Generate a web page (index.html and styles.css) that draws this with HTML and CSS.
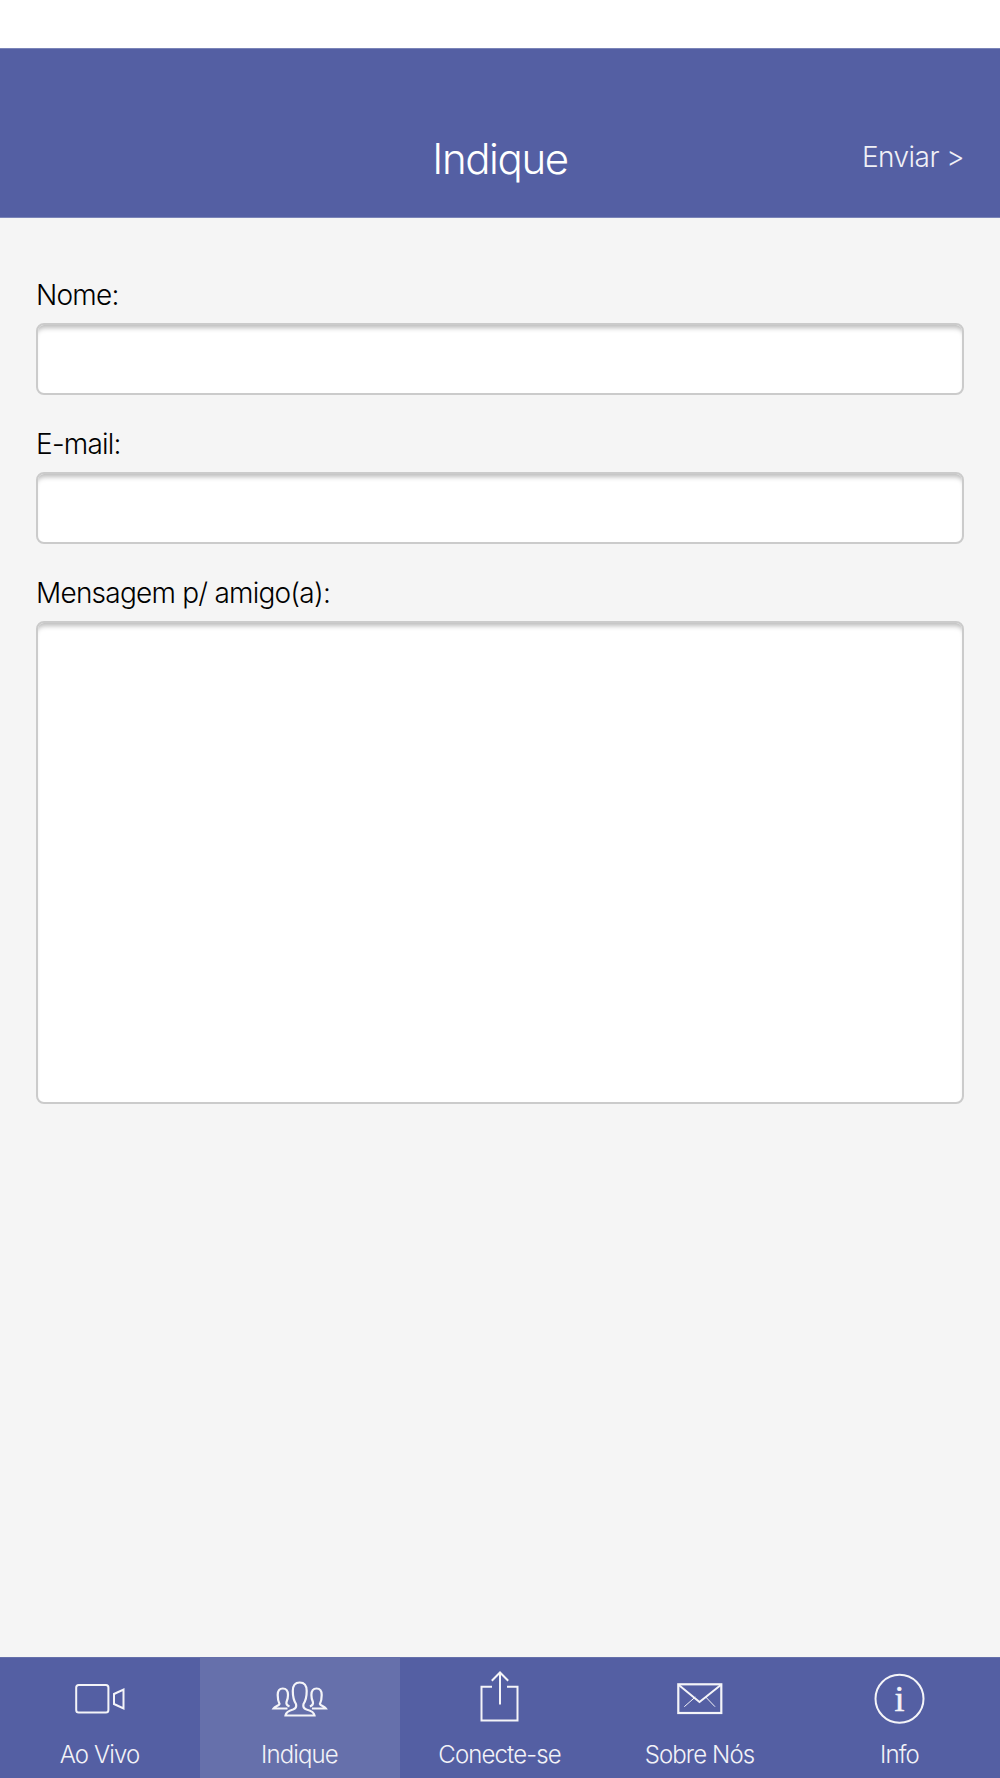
FILE: index.html
```html
<!DOCTYPE html>
<html lang="pt">
<head>
<meta charset="utf-8">
<title>Indique</title>
<link rel="stylesheet" href="styles.css">
</head>
<body>
<div class="app">
  <div class="status"></div>
  <header class="header">
    <h1 class="title">Indique</h1>
    <a class="send">Enviar &gt;</a>
  </header>
  <main class="form">
    <label class="label">Nome:</label>
    <input class="field" type="text">
    <label class="label">E-mail:</label>
    <input class="field" type="text">
    <label class="label">Mensagem p/ amigo(a):</label>
    <textarea class="field area"></textarea>
  </main>
  <nav class="tabs">
    <a class="tab">
      <svg class="icon" viewBox="0 0 60 60"><rect x="6.2" y="16" width="32.2" height="27.5" rx="2.5"/><path d="M44 25 53.5 20.5V39.5L44 35Z"/></svg>
      <span class="tab-label">Ao Vivo</span>
    </a>
    <a class="tab active">
      <svg class="icon people" viewBox="0 0 60 60"><path d="M15.5 46.5C16 43 19 41.5 23 40.5 26 39.5 26.5 37 26 35 24 32 22.8 28 22.8 22 22.8 16 25.5 13.5 29.7 13.5 34 13.5 36.7 16 36.7 22 36.7 28 35.5 32 33.5 35 33 37 33.5 39.5 36.5 40.5 40.5 41.5 44 43 44.5 46.5Z"/><path d="M17.5 39.5H3.5C5 37 9 37 9.5 35 8 32 7.7 29 7.7 26 7.7 21 10 19.5 12.8 19.5 15.6 19.5 18 21 18 26 18 29 17.5 31 16.5 33 16 35 17 36.5 19.5 37.5"/><path d="M41.9 39.5H55.9C54.4 37 50.4 37 49.9 35 51.4 32 51.7 29 51.7 26 51.7 21 49.4 19.5 46.6 19.5 43.8 19.5 41.4 21 41.4 26 41.4 29 41.9 31 42.9 33 43.4 35 42.4 36.5 39.9 37.5"/></svg>
      <span class="tab-label">Indique</span>
    </a>
    <a class="tab">
      <svg class="icon" viewBox="0 0 60 60"><path d="M22 17.8H11.5V51.5H47.5V17.8H37"/><path d="M30 35.5V3.5M21.8 11.7 30 3.5 38.2 11.7"/></svg>
      <span class="tab-label">Conecte-se</span>
    </a>
    <a class="tab">
      <svg class="icon" viewBox="0 0 60 60"><rect class="env-box" x="8.3" y="15.3" width="43" height="28.7"/><path d="M8.8 16 29.5 33 50.8 16"/><path class="env-fold" d="M14.3 37.7 25.3 28M45 37.7 35.7 28"/></svg>
      <span class="tab-label">Sobre Nós</span>
    </a>
    <a class="tab">
      <svg class="icon" viewBox="0 0 60 60"><circle cx="29.5" cy="29.8" r="24"/><text class="info-i" x="29.5" y="41.5">i</text></svg>
      <span class="tab-label">Info</span>
    </a>
  </nav>
</div>
</body>
</html>
```
FILE: styles.css
```css
* { box-sizing: border-box; }
html, body { margin: 0; padding: 0; }
body {
  background: #fff;
  font-family: Inter, "Liberation Sans", sans-serif;
  font-weight: 300;
}
.app {
  width: 1000px;
  height: 1778px;
  display: flex;
  flex-direction: column;
  background: #f5f5f5;
}
.status { height: 48px; background: #fff; }
.header {
  height: 170px;
  background: #545fa3;
  border-top: 1px solid #7a84b8;
  border-bottom: 1px solid #7a84b8;
  display: flex;
  align-items: flex-end;
  justify-content: center;
  position: relative;
  color: #fff;
}
.title {
  margin: 0 0 33px;
  font-size: 42px;
  line-height: 50px;
  font-weight: 300;
  letter-spacing: -1.4px;
}
.send {
  position: absolute;
  right: 36px;
  bottom: 42px;
  font-size: 28px;
  line-height: 36px;
  letter-spacing: -0.55px;
  color: #f0f0f6;
}
.form {
  flex: 1;
  padding: 62px 36px 0;
  display: flex;
  flex-direction: column;
}
.label {
  display: block;
  font-size: 28px;
  line-height: 30px;
  letter-spacing: -0.77px;
  color: #000;
  height: 30px;
  margin: 0 0 13px;
}
.field {
  display: block;
  width: 100%;
  height: 72px;
  margin: 0 0 34px;
  background: #fff;
  border: 2px solid #cbcbcb;
  border-radius: 8px;
  box-shadow: inset 0 6px 5px -3px #bdbdbd;
  outline: none;
  resize: none;
  padding: 0;
}
.area { height: 483px; margin: 0; }
.tabs {
  height: 121px;
  display: flex;
  background: #545fa3;
  border-top: 1px solid #6670ab;
}
.tab {
  flex: 1;
  display: flex;
  flex-direction: column;
  align-items: center;
  color: #f2f2f7;
  padding-top: 11px;
}
.tab.active { background: #6670ab; }
.icon {
  display: block;
  width: 60px;
  height: 60px;
  fill: none;
  stroke: #f4f4f8;
  stroke-width: 2;
}
.people { stroke-width: 2.2; }
.env-box { stroke-width: 2.2; }
.env-fold { stroke-width: 1; }
.info-i {
  font-family: "Liberation Serif", serif;
  font-size: 36px;
  text-anchor: middle;
  fill: #f4f4f8;
  stroke: #f4f4f8;
  stroke-width: 0.5;
}
.tab-label {
  margin-top: 11px;
  margin-right: 1px;
  font-size: 24px;
  line-height: 30px;
  letter-spacing: -0.88px;
}
```
